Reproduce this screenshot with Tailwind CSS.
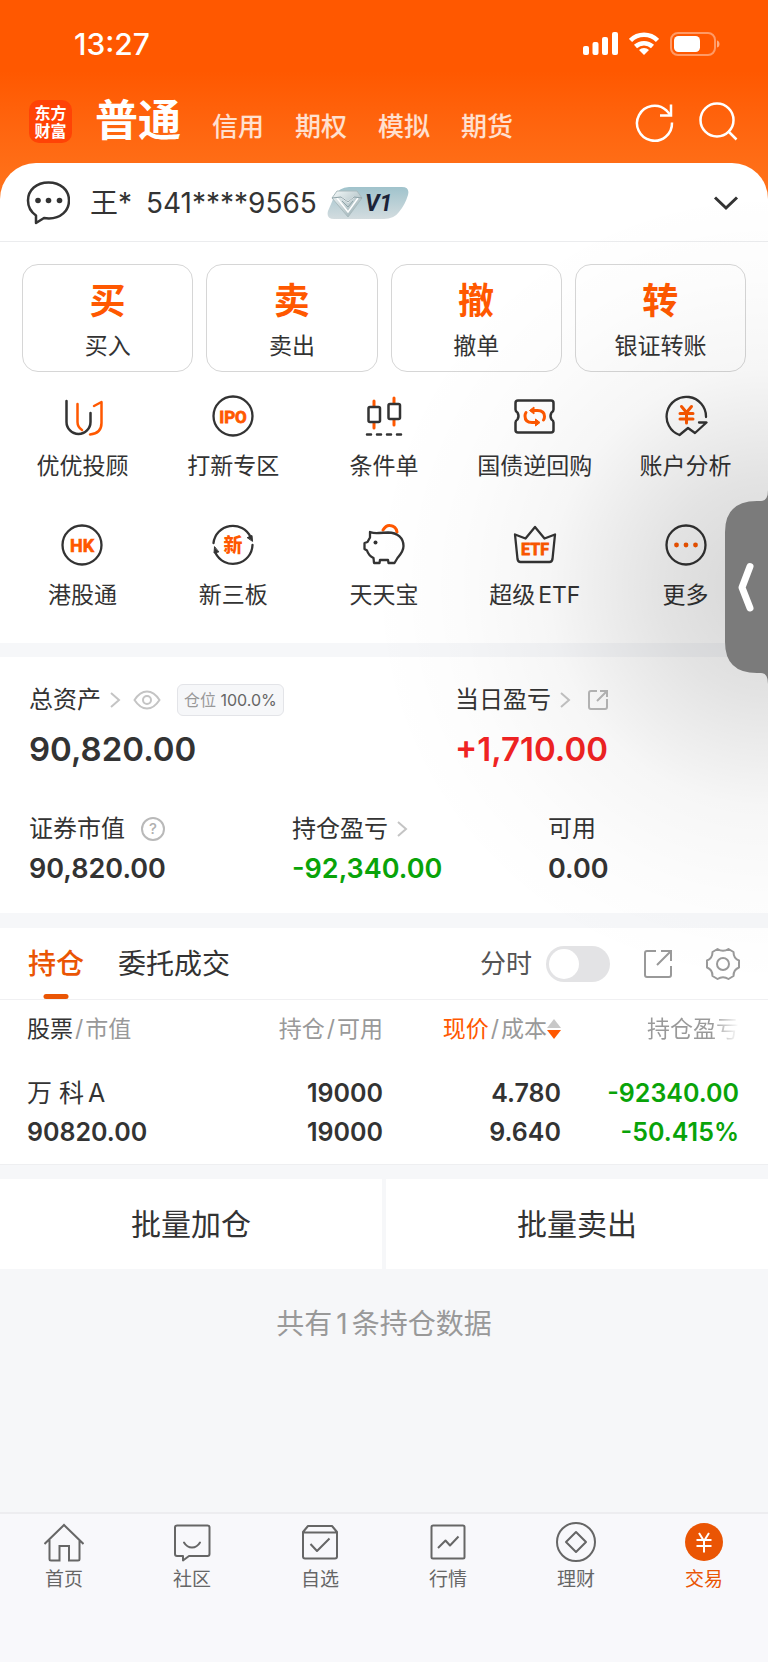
<!DOCTYPE html>
<html lang="zh-CN">
<head>
    <meta charset="UTF-8">
    <meta name="viewport" content="width=device-width, initial-scale=1.0">
    <title>东方财富 - 交易</title>
    <script src="https://cdn.jsdelivr.net/npm/@tailwindcss/browser@4"></script>
</head>
<body class="relative min-h-screen flex flex-col overflow-x-hidden bg-[#f6f7f9] text-[#333] font-['Inter','Noto_Sans_CJK_SC',sans-serif]">
    <!-- Header -->
    <header class="bg-linear-to-b from-[#ff5800] from-35% to-[#ff7119] to-90% text-white pb-10 -mb-10">
        <!-- Status bar -->
        <div class="flex items-center justify-between h-22 pl-[74px] pr-12">
            <span class="text-[30px] font-medium">13:27</span>
            <div class="flex items-center gap-[11px]">
                <svg class="w-[35px] h-6" viewBox="0 0 35 24" fill="currentColor">
                    <rect x="0" y="14" width="6" height="9" rx="2"/>
                    <rect x="9.500" y="10" width="6" height="13" rx="2"/>
                    <rect x="19" y="5" width="6" height="18" rx="2"/>
                    <rect x="29" y="0" width="6" height="23" rx="2"/>
                </svg>
                <svg class="w-[30px] h-6" viewBox="0 0 30 24" fill="none" stroke="currentColor" stroke-width="4.500">
                    <path d="M1.500 8.500a19 19 0 0 1 27 0"/>
                    <path d="M6.500 14.500a12.500 12.500 0 0 1 17 0"/>
                    <path d="M10 18a7 7 0 0 1 10 0l-5 5z" fill="currentColor" stroke="none"/>
                </svg>
                <svg class="w-[50px] h-6" viewBox="0 0 50 24" fill="none">
                    <rect x="1" y="1" width="44" height="22" rx="7" stroke="#ffffff" stroke-opacity=".4" stroke-width="2"/>
                    <rect x="4" y="4" width="26" height="16" rx="4.500" fill="#ffffff"/>
                    <path d="M47 8.500c2 .5 2.500 2 2.500 3.500s-.5 3-2.500 3.500z" fill="#ffffff" fill-opacity=".5"/>
                </svg>
            </div>
        </div>
        <!-- Account type tabs -->
        <div class="flex items-center h-[75px] pl-[29px] pr-7 pb-2">
            <div class="w-[43px] h-[43px] rounded-[10px] bg-[#ff4306] flex items-center justify-center text-center text-base leading-[18px] font-bold">东方<br>财富</div>
            <nav class="flex items-baseline gap-[31px] ml-[23px] pt-1 text-[26px] leading-10 text-white/80 font-medium">
                <a href="#" class="text-[43px] font-bold text-white">普通</a>
                <a href="#">信用</a>
                <a href="#">期权</a>
                <a href="#">模拟</a>
                <a href="#">期货</a>
            </nav>
            <div class="flex gap-5 ml-auto">
                <button type="button" aria-label="刷新">
                    <svg class="w-11 h-11" viewBox="0 0 44 44" fill="none" stroke="currentColor" stroke-width="2.500">
                        <path d="M40 22.500A17.500 17.500 0 1 1 34.500 10.500L38 14.500"/>
                        <path d="M39 4.500V15.500H28"/>
                    </svg>
                </button>
                <button type="button" aria-label="搜索">
                    <svg class="w-11 h-11" viewBox="0 0 44 44" fill="none" stroke="currentColor" stroke-width="2.500">
                        <circle cx="21" cy="20" r="16.500"/>
                        <path d="M32 31l8.500 8.500"/>
                    </svg>
                </button>
            </div>
        </div>
    </header>

    <main class="flex-1">
        <section class="bg-white rounded-t-[36px]">
            <!-- Account -->
            <div class="flex items-center h-[79px] pl-[26px] pr-7 pt-px border-b border-[#ebecee]">
                <svg class="w-11 h-11" viewBox="0 0 44 44" fill="none" stroke="#333333" stroke-width="2.500">
                    <path d="M10 34.500v7.500l8-5c2 .4 3 .4 5 .4 11.500 0 20-7.500 20-18S34.500 1.500 22.500 1.500 2 9 2 19.500c0 6.500 3 11.500 8 15z" stroke-linejoin="round"/>
                    <g fill="#333333" stroke="none"><circle cx="12" cy="19.500" r="2.800"/><circle cx="22.500" cy="19.500" r="2.800"/><circle cx="33.500" cy="19.500" r="2.800"/></g>
                </svg>
                <span class="ml-5 text-[28px]">王*</span>
                <span class="ml-[14px] text-[28px]">541****9565</span>
                <svg class="w-[82px] h-8 ml-[10px]" viewBox="0 0 82 32">
                    <defs>
                        <linearGradient id="badge" x1="0" y1="0" x2="0" y2="1"><stop offset="0" stop-color="#a0c3cc"/><stop offset="1" stop-color="#d3dcdf"/></linearGradient>
                        <linearGradient id="gem" x1="0" y1="0" x2="1" y2="1"><stop offset="0" stop-color="#f4f9f9"/><stop offset="1" stop-color="#93a9af"/></linearGradient>
                    </defs>
                    <path d="M22 0H75q8 0 6 8Q78 18 72 25 67 32 57 32H7Q-1 32 1 24L7 10Q12 0 22 0z" fill="url(#badge)"/>
                    <path d="M10 4h20l5 7-14 19L5 11z" fill="url(#gem)" stroke="#a9babd"/>
                    <path d="M10 11l11 14 10-14M14 10l7 5 6-5" fill="none" stroke="#ffffff" stroke-width="1.500"/>
                    <path d="M5 11l9-1 7 5 6-5 8 1M15 14l6 6 5-6" fill="none" stroke="#8fa3a8"/>
                    <text x="38" y="24" font-family="Roboto" font-size="23" font-weight="700" font-style="italic" fill="#1b2338">V1</text>
                </svg>
                <button type="button" aria-label="切换账户" class="ml-auto">
                    <svg class="w-7 h-7" viewBox="0 0 28 28" fill="none" stroke="#333333" stroke-width="3"><path d="M3 8.500l11 10.500 11-10.500"/></svg>
                </button>
            </div>

            <!-- Main trade actions -->
            <div class="grid grid-cols-4 gap-[13px] px-[22px] pt-[22px]">
                <button type="button" class="h-[108px] border border-[#d6d6d6] rounded-2xl flex flex-col items-center justify-center gap-[7px] pt-1 text-[23px] leading-8"><span class="text-4xl leading-[44px] font-bold text-[#ff5800]">买</span>买入</button>
                <button type="button" class="h-[108px] border border-[#d6d6d6] rounded-2xl flex flex-col items-center justify-center gap-[7px] pt-1 text-[23px] leading-8"><span class="text-4xl leading-[44px] font-bold text-[#ff5800]">卖</span>卖出</button>
                <button type="button" class="h-[108px] border border-[#d6d6d6] rounded-2xl flex flex-col items-center justify-center gap-[7px] pt-1 text-[23px] leading-8"><span class="text-4xl leading-[44px] font-bold text-[#ff5800]">撤</span>撤单</button>
                <button type="button" class="h-[108px] border border-[#d6d6d6] rounded-2xl flex flex-col items-center justify-center gap-[7px] pt-1 text-[23px] leading-8"><span class="text-4xl leading-[44px] font-bold text-[#ff5800]">转</span>银证转账</button>
            </div>

            <!-- Shortcuts -->
            <div class="grid grid-cols-5 gap-y-[41px] px-[7px] pt-[22px] pb-8 text-[23px] leading-8">
                <a href="#" class="flex flex-col items-center gap-3">
                    <svg class="w-11 h-11" viewBox="0 0 44 44" fill="none" stroke="#333333" stroke-width="2.500" stroke-linecap="round" stroke-linejoin="round">
                        <path d="M6.500 7v21a12 12 0 0 0 24 0V19"/>
                        <path d="M17.500 10v18q0 5 4.500 8M34 12l7.500-4v21q0 10.500-11.500 11.500" stroke="#ff5800"/>
                    </svg>
                    优优投顾
                </a>
                <a href="#" class="flex flex-col items-center gap-3">
                    <svg class="w-11 h-11" viewBox="0 0 44 44">
                        <circle cx="22" cy="22" r="19.500" fill="none" stroke="#333333" stroke-width="2.300"/>
                        <text x="22" y="28.500" text-anchor="middle" font-family="Roboto" font-size="17" font-weight="700" fill="#ff5800" stroke="#ff5800" stroke-width=".8">IPO</text>
                    </svg>
                    打新专区
                </a>
                <a href="#" class="flex flex-col items-center gap-3">
                    <svg class="w-11 h-11" viewBox="0 0 44 44" fill="none" stroke="#333333" stroke-width="2.500" stroke-linecap="round">
                        <path d="M12 7v5M12 29v5M32 4v5M32 26v5" stroke="#ff5800" stroke-width="3"/>
                        <rect x="6.500" y="13" width="11.500" height="15" rx="1.500"/>
                        <rect x="26.500" y="10" width="11.500" height="15" rx="1.500"/>
                        <path d="M5 40.500h4M15 40.500h4M25 40.500h4M35 40.500h4"/>
                    </svg>
                    条件单
                </a>
                <a href="#" class="flex flex-col items-center gap-3">
                    <svg class="w-11 h-11" viewBox="0 0 44 44" fill="none" stroke="#333333" stroke-width="2.500" stroke-linejoin="round">
                        <path d="M5 6.500H38q2.500 0 2.500 2.500v6.500q0 2-2 3-2 3.500 0 7 2 1 2 3V36q0 2.500-2.500 2.500H5Q2.500 38.500 2.500 36v-7.500q0-2 2-3 2-3.500 0-7-2-1-2-3V9Q2.500 6.500 5 6.500z"/>
                        <g stroke="#ff5800" stroke-width="3" stroke-linecap="round">
                            <path d="M19 16.500h5.500q7 0 7 6 0 2-1 3.500M24 28.500h-5q-7 0-7-6.500 0-2 1-3.500"/>
                        </g>
                        <path d="M21 13v7l-4.500-3.500zM22.500 25v7l4.500-3.500z" stroke="#ff5800" stroke-width="1" fill="#ff5800"/>
                    </svg>
                    国债逆回购
                </a>
                <a href="#" class="flex flex-col items-center gap-3">
                    <svg class="w-11 h-11" viewBox="0 0 44 44" fill="none" stroke="#333333" stroke-width="2.300" stroke-linecap="round" stroke-linejoin="round">
                        <path d="M42 23A19.700 19.700 0 1 0 15.500 41L24 34l7 5L42.500 28.500H35"/>
                        <path d="M17.500 12.500l5 6 5-6M22.500 19v10M16 19.500h13M16 25h13" stroke="#ff5800" stroke-width="3"/>
                    </svg>
                    账户分析
                </a>
                <a href="#" class="flex flex-col items-center gap-3">
                    <svg class="w-11 h-11" viewBox="0 0 44 44">
                        <circle cx="22" cy="22" r="19.500" fill="none" stroke="#333333" stroke-width="2.300"/>
                        <text x="22" y="28.500" text-anchor="middle" font-family="Roboto" font-size="18" font-weight="700" fill="#ff5800" stroke="#ff5800" stroke-width=".6">HK</text>
                    </svg>
                    港股通
                </a>
                <a href="#" class="flex flex-col items-center gap-3">
                    <svg class="w-11 h-11" viewBox="0 0 44 44" fill="none" stroke="#333333" stroke-width="2.300" stroke-linecap="round">
                        <path d="M2.500 20A19.500 19.500 0 0 1 39.500 14M41.500 22A19.500 19.500 0 0 1 4.500 30"/>
                        <path d="M36.500 14.500l4.500-2 .5 5.500zM7.500 29l-4.500 1 .5-6z" fill="#333333" stroke-width="1"/>
                        <text x="22" y="29" text-anchor="middle" font-family="Noto Sans CJK SC" font-size="19" font-weight="900" fill="#ff5800" stroke="none">新</text>
                    </svg>
                    新三板
                </a>
                <a href="#" class="flex flex-col items-center gap-3">
                    <svg class="w-11 h-11" viewBox="0 0 44 44" fill="none" stroke="#333333" stroke-width="2.300" stroke-linecap="round" stroke-linejoin="round">
                        <path d="M21 7q3-5 7-4.500 6 .5 7 6.500" stroke="#ff5800" stroke-width="3"/>
                        <path d="M8 9q4 1.500 9 1l9-.5c10 0 15.500 6 15.500 13.500 0 5.500-4 9.500-6 12l-3 5h-6l-.5-3h-8l-.5 3h-5.500l-.5-5q-5-2.500-6.500-7.500l-2.500-1.500v-6l3-1 2.500-4.500Q8 13.500 8 9z"/>
                        <circle cx="13.500" cy="19.500" r="2" fill="#333333" stroke="none"/>
                    </svg>
                    天天宝
                </a>
                <a href="#" class="flex flex-col items-center gap-3">
                    <svg class="w-11 h-11" viewBox="0 0 44 44">
                        <path d="M2 11.500L12.500 15.500 22 4l9.500 11.500L42 11.500 39.500 36q-.5 3-3 3h-29q-2.500 0-3-3z" fill="none" stroke="#333333" stroke-width="2.300" stroke-linejoin="round"/>
                        <text x="22" y="32" text-anchor="middle" font-family="Roboto" font-size="16" font-weight="700" fill="#ff5800" stroke="#ff5800" stroke-width=".8">ETF</text>
                    </svg>
                    <span>超级<span class="ml-[3px]">ETF</span></span>
                </a>
                <a href="#" class="flex flex-col items-center gap-3">
                    <svg class="w-11 h-11" viewBox="0 0 44 44">
                        <circle cx="22" cy="22" r="19.500" fill="none" stroke="#333333" stroke-width="2.300"/>
                        <g fill="#ff5800"><circle cx="12.500" cy="22" r="2.400"/><circle cx="22" cy="22" r="2.400"/><circle cx="31.500" cy="22" r="2.400"/></g>
                    </svg>
                    更多
                </a>
            </div>
        </section>

        <!-- Assets -->
        <section class="bg-white mt-[14px] pl-[29px] pr-7 pt-[26px] pb-[25px]">
            <div class="grid grid-cols-[426px_1fr]">
                <div>
                    <div class="flex items-center h-[34px] text-2xl">
                        总资产
                        <svg class="w-3 h-5 ml-2" viewBox="0 0 12 20" fill="none" stroke="#c4c4c4" stroke-width="2"><path d="M2 3l8 7-8 7"/></svg>
                        <svg class="w-7 h-5 ml-3" viewBox="0 0 28 20" fill="none" stroke="#c4c4c4" stroke-width="2"><path d="M1.500 10Q7 1.500 14 1.500T26.500 10Q21 18.500 14 18.500T1.500 10z"/><circle cx="14" cy="10" r="4"/></svg>
                        <span class="ml-4 h-8 px-[6px] border border-[#e3e4e8] rounded-md bg-[#f6f7f9] text-base leading-[30px] text-[#666] whitespace-nowrap"><span class="text-[#999]">仓位</span> 100.0%</span>
                    </div>
                    <p class="mt-[11px] text-[33px] leading-[42px] font-semibold">90,820.00</p>
                </div>
                <div>
                    <div class="flex items-center h-[34px] text-2xl">
                        当日盈亏
                        <svg class="w-3 h-5 ml-2" viewBox="0 0 12 20" fill="none" stroke="#c4c4c4" stroke-width="2"><path d="M2 3l8 7-8 7"/></svg>
                        <svg class="w-[22px] h-[22px] ml-4" viewBox="0 0 22 22" fill="none" stroke="#b9b9b9" stroke-width="2"><path d="M10 2H4Q2 2 2 4V18q0 2 2 2H18q2 0 2-2V10M13 2h7v6M20 2L10 12"/></svg>
                    </div>
                    <p class="mt-[11px] text-[33px] leading-[42px] font-semibold text-[#f12323]">+1,710.00</p>
                </div>
            </div>
            <div class="grid grid-cols-[263px_256px_1fr] mt-[42px]">
                <div>
                    <div class="flex items-center h-[34px] text-2xl">
                        证券市值
                        <svg class="w-6 h-6 ml-4" viewBox="0 0 24 24" fill="none"><circle cx="12" cy="12" r="11" stroke="#b9b9b9" stroke-width="2"/><text x="12" y="17" text-anchor="middle" font-size="15" font-weight="500" fill="#b0b0b0">?</text></svg>
                    </div>
                    <p class="mt-1 text-[27px] leading-[38px] font-semibold">90,820.00</p>
                </div>
                <div>
                    <div class="flex items-center h-[34px] text-2xl">
                        持仓盈亏
                        <svg class="w-3 h-5 ml-2" viewBox="0 0 12 20" fill="none" stroke="#c4c4c4" stroke-width="2"><path d="M2 3l8 7-8 7"/></svg>
                    </div>
                    <p class="mt-1 text-[27px] leading-[38px] font-semibold text-[#09a309]">-92,340.00</p>
                </div>
                <div>
                    <div class="flex items-center h-[34px] text-2xl">可用</div>
                    <p class="mt-1 text-[27px] leading-[38px] font-semibold">0.00</p>
                </div>
            </div>
        </section>

        <!-- Positions -->
        <section class="bg-white mt-[15px] border-b border-[#eeeff1]">
            <div class="flex items-center h-[72px] pl-7 pr-7 border-b border-[#f0f0f2]">
                <button type="button" class="relative h-full text-[28px] font-medium text-[#ea5504]">持仓<span class="absolute bottom-0 left-1/2 -translate-x-1/2 w-[25px] h-[5px] rounded-full bg-[#ea5504]"></span></button>
                <button type="button" class="ml-[34px] h-full text-[28px]">委托成交</button>
                <label for="minute" class="ml-auto text-[26px] text-[#555]">分时</label>
                <input id="minute" type="checkbox" role="switch" class="appearance-none ml-[14px] w-16 h-9 rounded-full bg-[#e3e3e5] p-[3px] before:block before:w-[30px] before:h-[30px] before:rounded-full before:bg-white">
                <button type="button" aria-label="分享" class="ml-8"><svg class="w-8 h-8" viewBox="0 0 32 32" fill="none" stroke="#999999" stroke-width="2"><path d="M14 3H5Q3 3 3 5V27q0 2 2 2H27q2 0 2-2V18M19 3H29V13M29 3L15 17"/></svg></button>
                <button type="button" aria-label="设置" class="ml-8"><svg class="w-[34px] h-[34px]" viewBox="0 0 34 34" fill="none" stroke="#999999" stroke-width="2" stroke-linejoin="round"><path d="M11.500 2Q17 5.500 22.500 2L27.500 5Q27.500 11.500 33 13.500V20.500Q27.500 22.500 27.500 29L22.500 32Q17 28.500 11.500 32L6.500 29Q6.500 22.500 1 20.500V13.500Q6.500 11.500 6.500 5z"/><circle cx="17" cy="17" r="6"/></svg></button>
            </div>
            <div class="pl-[27px] pr-[29px]">
                <table class="w-full table-fixed text-right text-[25px] font-semibold">
                    <thead class="text-[23px] leading-8 text-[#999]">
                        <tr class="h-[58px]">
                            <th class="font-normal text-left"><span class="text-[#333]">股票</span><span class="mx-[2px]">/</span>市值</th>
                            <th class="font-normal">持仓<span class="mx-[2px]">/</span>可用</th>
                            <th class="font-normal whitespace-nowrap"><span class="text-[#ff5800]">现价</span><span class="mx-[2px]">/</span>成本<svg class="inline w-[14px] h-5 -mt-1" viewBox="0 0 14 20"><path d="M7 0l7 9H0z" fill="#c8c8c8"/><path d="M7 20l7-9H0z" fill="#ff5800"/></svg></th>
                            <th class="font-normal"><span class="bg-linear-to-r from-[#999] from-70% to-transparent bg-clip-text text-transparent">持仓盈亏</span></th>
                        </tr>
                    </thead>
                    <tbody class="leading-[39px]">
                        <tr>
                            <td class="pt-4 pb-3 text-left"><span class="font-normal">万 科<span class="ml-1">A</span></span><br>90820.00</td>
                            <td class="pt-4 pb-3">19000<br>19000</td>
                            <td class="pt-4 pb-3">4.780<br>9.640</td>
                            <td class="pt-4 pb-3 text-[#09a309]">-92340.00<br>-50.415%</td>
                        </tr>
                    </tbody>
                </table>
            </div>
        </section>

        <!-- Batch actions -->
        <div class="grid grid-cols-2 gap-1 mt-[14px] text-3xl">
            <button type="button" class="h-[90px] bg-white">批量加仓</button>
            <button type="button" class="h-[90px] bg-white">批量卖出</button>
        </div>
        <p class="mt-[35px] text-center text-[28px] leading-10 text-[#999]">共有<span class="mx-1">1</span>条持仓数据</p>
    </main>

    <!-- Bottom navigation -->
    <nav class="grid grid-cols-6 h-[150px] pt-2 border-t-2 border-[#ededf0] bg-[#f8f8fb] text-[19px] leading-7 text-[#666]">
        <a href="#" class="flex flex-col items-center gap-1">
            <svg class="w-10 h-10" viewBox="0 0 40 40" fill="none" stroke="currentColor" stroke-width="2"><path d="M.5 22L20 3l19.500 19M5.500 18v19q0 1.500 1.500 1.500h8.500V24H25v14.500h9q1.500 0 1.500-1.500V18"/></svg>
            首页
        </a>
        <a href="#" class="flex flex-col items-center gap-1">
            <svg class="w-10 h-10" viewBox="0 0 40 40" fill="none" stroke="currentColor" stroke-width="2" stroke-linejoin="round"><path d="M5 3.500H35.500q2 0 2 2V32q0 2-2 2H17l-6 4.500V34H5q-2 0-2-2V5.500q0-2 2-2z"/><path d="M12 20.500q3 5 8 5t8-5" stroke-linecap="round"/></svg>
            社区
        </a>
        <a href="#" class="flex flex-col items-center gap-1">
            <svg class="w-10 h-10" viewBox="0 0 40 40" fill="none" stroke="currentColor" stroke-width="2" stroke-linejoin="round"><path d="M3 10L8 4H32l5 6V34.500q0 2-2 2H5q-2 0-2-2zM3 10.500H37M10.500 22l6.500 7 12.500-12.500"/></svg>
            自选
        </a>
        <a href="#" class="flex flex-col items-center gap-1">
            <svg class="w-10 h-10" viewBox="0 0 40 40" fill="none" stroke="currentColor" stroke-width="2" stroke-linejoin="round"><rect x="3.500" y="3.500" width="33" height="33" rx="1.500"/><path d="M10 26l7.500-7.500 4.500 5 8.500-9"/></svg>
            行情
        </a>
        <a href="#" class="flex flex-col items-center gap-1">
            <svg class="w-10 h-10" viewBox="0 0 40 40" fill="none" stroke="currentColor" stroke-width="2" stroke-linejoin="round"><circle cx="20" cy="20" r="19"/><path d="M20 10l10 10-10 10L10 20z"/></svg>
            理财
        </a>
        <a href="#" class="flex flex-col items-center gap-1 text-[#ea5504]" aria-current="page">
            <svg class="w-10 h-10" viewBox="0 0 40 40" fill="none" stroke="#ffffff" stroke-width="2"><circle cx="20" cy="20" r="19" fill="#ea5504" stroke="none"/><path d="M15 11l5 8 5-8M20 19v11.500M12.500 18h15M12.500 24h15"/></svg>
            交易
        </a>
    </nav>

    <!-- Side drawer handle with its soft shadow -->
    <div class="absolute right-0 top-[187px] w-[400px] h-[800px] pointer-events-none bg-[radial-gradient(400px_400px_at_100%_50%,rgb(0_0_0/0.16),rgb(0_0_0/0.11)_27%,rgb(0_0_0/0.035)_55%,rgb(0_0_0/0.01)_78%,transparent)]"></div>
    <button type="button" aria-label="展开侧栏" class="absolute right-0 top-[490px]">
        <svg class="w-[43px] h-[194px]" viewBox="0 0 43 194"><path d="M43 0Q43 11 36 11H32Q0 11 0 42V152Q0 183 32 183H36Q43 183 43 194z" fill="#7b7b7b"/><path d="M25 76.500L17 97.500 25 118" fill="none" stroke="#ffffff" stroke-width="7" stroke-linecap="round" stroke-linejoin="round"/></svg>
    </button>
</body>
</html>
